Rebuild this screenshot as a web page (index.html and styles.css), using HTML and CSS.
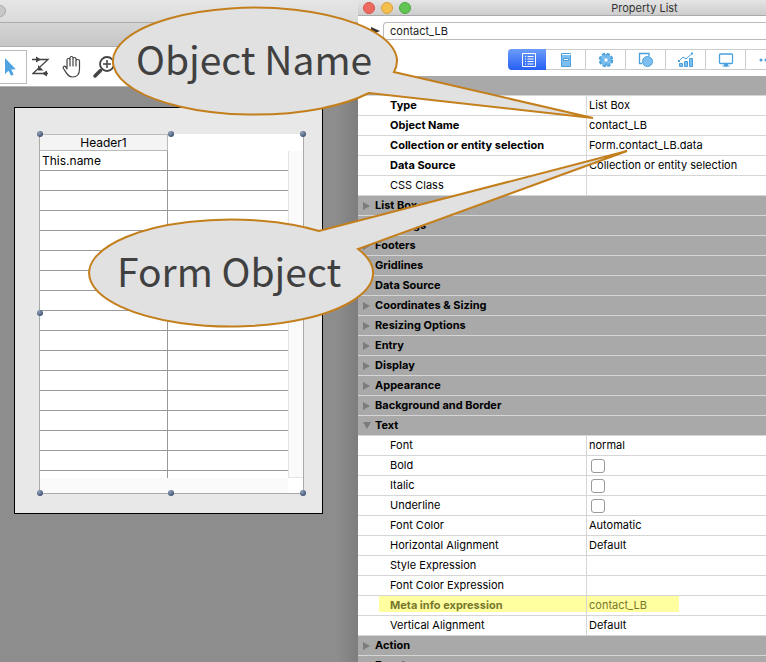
FILE: index.html
```
<!DOCTYPE html>
<html lang="en">
<head>
<meta charset="utf-8">
<title>Property List</title>
<link rel="stylesheet" href="styles.css">
</head>
<body>
<div class="desktop">
  <section class="editor" aria-label="Form editor">
    <header class="titlebar"><span class="dot dot-off"></span></header>
    <div class="subbar"></div>
    <div class="toolbar">
      <button class="tool active" aria-label="Select">
        <svg width="26" height="34" viewBox="0 0 26 34"><path d="M5 8v16l3.500-3.200 2.600 5 2.600-1.400-2.500-4.800 4.600-.4z" fill="#4fa3e0"/></svg>
      </button>
      <button class="tool" aria-label="Entry order">
        <svg width="20" height="22" viewBox="0 0 20 22" fill="none" stroke="#444" stroke-width="1.300"><path d="M0 3.500h16L1 17.500h15"/><path d="M4 .5l5 3-5 3zM15 14.500l-5 3 5 3zM6 9v5.500h5.500z" fill="#444" stroke="none"/></svg>
      </button>
      <button class="tool" aria-label="Pan">
        <svg width="20" height="24" viewBox="0 0 20 24" fill="none" stroke="#444" stroke-width="1.200" stroke-linejoin="round" stroke-linecap="round"><path d="M5 13V5c0-2 3-2 3 0v6M8 6V3c0-2 3-2 3 0v8M11 4c0-2 3-2 3 0v7M14 6c0-2 3.500-2 3.500 0v8c0 5-2.500 8-7 8C6 22 4.500 18 1.500 13.500c-1-2 1-3 2.300-1.500L5 14"/></svg>
      </button>
      <button class="tool" aria-label="Zoom">
        <svg width="24" height="24" viewBox="0 0 24 24" fill="none" stroke="#444"><circle cx="15" cy="9" r="7" stroke-width="1.800"/><path d="M11 9h8M15 5v8" stroke-width="1.500"/><path d="M8.500 15.500L3 21" stroke-width="3.500" stroke-linecap="round"/></svg>
      </button>
    </div>
    <div class="canvas">
      <div class="form-page">
        <div class="listbox">
          <table class="grid">
            <thead><tr><th>Header1</th><td></td></tr></thead>
            <tbody>
              <tr><td>This.name</td><td></td></tr>
              <tr><td></td><td></td></tr><tr><td></td><td></td></tr><tr><td></td><td></td></tr>
              <tr><td></td><td></td></tr><tr><td></td><td></td></tr><tr><td></td><td></td></tr>
              <tr><td></td><td></td></tr><tr><td></td><td></td></tr><tr><td></td><td></td></tr>
              <tr><td></td><td></td></tr><tr><td></td><td></td></tr><tr><td></td><td></td></tr>
              <tr><td></td><td></td></tr><tr><td></td><td></td></tr><tr><td></td><td></td></tr>
              <tr class="partial"><td></td><td></td></tr>
            </tbody>
          </table>
          <div class="vscroll"></div>
          <div class="hscroll"></div>
          <i class="handle t l"></i><i class="handle t c"></i><i class="handle t r"></i>
          <i class="handle m l"></i><i class="handle b l"></i><i class="handle b c"></i><i class="handle b r"></i>
        </div>
      </div>
    </div>
  </section>

  <section class="panel" aria-label="Property List">
    <header class="titlebar panel-title">
      <span class="dot red"></span><span class="dot yellow"></span><span class="dot green"></span>
      <h1>Property List</h1>
    </header>
    <div class="picker">
      <svg width="10" height="8" viewBox="0 0 10 8" aria-hidden="true"><path d="M1 0l9 4-9 4z" fill="#333"/></svg>
      <input type="text" value="contact_LB" aria-label="Object">
    </div>
    <div class="tabs">
      <button class="tab selected" aria-label="All properties"><svg width="16" height="16" viewBox="0 0 16 16" fill="none" stroke="#fff"><path d="M1.500 1.500h13v13h-13z"/><path d="M4 4.500h1M4 7h1M4 9.500h1M4 12h1M6.500 4.500h6M6.500 7h6M6.500 9.500h6M6.500 12h6"/></svg></button>
      <button class="tab" aria-label="Data"><svg width="16" height="16" viewBox="0 0 16 16"><path d="M3.500 1.500h9v13h-9z" fill="#7dc0ef" stroke="#4aa0dc"/><path d="M4 2.500h10" stroke="#fff"/><path d="M5.500 6.500h5v2h-5z" fill="#fff" stroke="#4aa0dc"/></svg></button>
      <button class="tab" aria-label="Settings"><svg width="16" height="16" viewBox="0 0 16 16"><circle cx="8" cy="8" r="6" fill="none" stroke="#4aa0dc" stroke-width="2.500" stroke-dasharray="3.200 1.500"/><circle cx="8" cy="8" r="5.500" fill="#7dc0ef" stroke="#4aa0dc" stroke-width=".6"/><path d="M8 3v10M3 8h10" stroke="#4aa0dc" stroke-width=".8"/><circle cx="8" cy="8" r="1.700" fill="#fff"/></svg></button>
      <button class="tab" aria-label="Appearance"><svg width="16" height="16" viewBox="0 0 16 16"><path d="M4 11.500H1.500V1.500H11V4" fill="none" stroke="#4aa0dc" stroke-width="1.300"/><circle cx="9.500" cy="9.500" r="5" fill="#7dc0ef" stroke="#4aa0dc"/></svg></button>
      <button class="tab" aria-label="Statistics"><svg width="16" height="16" viewBox="0 0 16 16"><path d="M1.500 11.500h3v3h-3zM6.500 9.500h3v5h-3zM11.500 6.500h3v8h-3z" fill="#7dc0ef" stroke="#4aa0dc"/><path d="M1 9l4-4 3 2 6-5.500" fill="none" stroke="#4aa0dc"/><path d="M13 .5h2v2h-2zM0 8h2v2H0z" fill="#4aa0dc"/></svg></button>
      <button class="tab" aria-label="Display"><svg width="16" height="16" viewBox="0 0 16 16"><rect x="1.500" y="2" width="13" height="9.500" rx="1" fill="none" stroke="#4aa0dc" stroke-width="1.300"/><path d="M6.500 12h3v2h-3zM4.500 14h7" fill="#4aa0dc" stroke="#4aa0dc"/></svg></button>
      <button class="tab" aria-label="More"><svg width="16" height="16" viewBox="0 0 16 16" fill="#4aa0dc"><circle cx="3" cy="8" r="1.500"/><circle cx="8" cy="8" r="1.500"/><circle cx="13" cy="8" r="1.500"/></svg></button>
    </div>
    <div class="props">
      <div class="group blank"></div>
      <div class="row strong"><span>Type</span><span>List Box</span></div>
      <div class="row strong"><span>Object Name</span><span>contact_LB</span></div>
      <div class="row strong"><span>Collection or entity selection</span><span>Form.contact_LB.data</span></div>
      <div class="row strong"><span>Data Source</span><span>Collection or entity selection</span></div>
      <div class="row"><span>CSS Class</span><span></span></div>
      <div class="group">List Box</div>
      <div class="group">Headings</div>
      <div class="group">Footers</div>
      <div class="group">Gridlines</div>
      <div class="group">Data Source</div>
      <div class="group">Coordinates &amp; Sizing</div>
      <div class="group">Resizing Options</div>
      <div class="group">Entry</div>
      <div class="group">Display</div>
      <div class="group">Appearance</div>
      <div class="group">Background and Border</div>
      <div class="group open">Text</div>
      <div class="row"><span>Font</span><span>normal</span></div>
      <div class="row"><label for="bold">Bold</label><span><input type="checkbox" id="bold"></span></div>
      <div class="row"><label for="italic">Italic</label><span><input type="checkbox" id="italic"></span></div>
      <div class="row"><label for="underline">Underline</label><span><input type="checkbox" id="underline"></span></div>
      <div class="row"><span>Font Color</span><span>Automatic</span></div>
      <div class="row"><span>Horizontal Alignment</span><span>Default</span></div>
      <div class="row"><span>Style Expression</span><span></span></div>
      <div class="row"><span>Font Color Expression</span><span></span></div>
      <div class="row strong marked"><span>Meta info expression</span><span>contact_LB</span></div>
      <div class="row"><span>Vertical Alignment</span><span>Default</span></div>
      <div class="group">Action</div>
      <div class="group">Events</div>
    </div>
  </section>

  <svg class="callouts" width="766" height="662" viewBox="0 0 766 662">
    <g fill="#e1e1e1" stroke="#c47f1d" stroke-width="2" stroke-linejoin="miter">
      <path d="M369 93A142 53.500 0 1 1 394 72L593 118Z"/>
      <path d="M319 231A142 53.500 0 1 0 358 249L627 151Z"/>
    </g>
    <text class="say" x="136" y="75">Object Name</text>
    <text class="say" x="117" y="287">Form Object</text>
  </svg>
</div>
</body>
</html>
```
FILE: styles.css
```
* { box-sizing: border-box; }
body { margin: 0; font-family: Inter, "Liberation Sans", sans-serif; font-size: 11px; color: #000; }
button { padding: 0; border: 0; background: none; }
.desktop { position: relative; display: flex; height: 100vh; overflow: hidden; background: #8d8d8d; }

.editor { flex: 0 0 358px; display: flex; flex-direction: column; }
.titlebar { display: flex; align-items: center; height: 23px; background: linear-gradient(#e6e6e6, #dadada); border-bottom: 1px solid #acacac; }
.dot { width: 12px; height: 12px; border-radius: 50%; border: 1px solid; }
.dot-off { margin-left: -6px; background: #c8c8c8; border-color: #aaa; }
.subbar { height: 24px; background: linear-gradient(#d4d4d4, #c6c6c6); border-bottom: 1px solid #b0b0b0; }
.toolbar { display: flex; align-items: center; gap: 10px; height: 40px; background: #fff; border-bottom: 1px solid #b4b4b4; }
.tool { display: flex; align-items: center; justify-content: center; }
.tool.active { width: 27px; height: 34px; border: 1px solid #bbb; border-left: 0; margin-right: -5px; }
.canvas { flex: 1; padding: 20px 35px 0 14px; background: linear-gradient(to right, transparent 94%, #7d7d7d); }
.form-page { height: 407px; padding: 26px 18px 19px 24px; background: #e8e8e8; border: 1px solid #000; }

.listbox { position: relative; display: grid; grid-template: 344px 1fr / 1fr 15px; height: 360px; background: #fff; border: 1px solid #aaa; border-top: 0; }
.grid { width: 100%; height: 344px; border-collapse: separate; border-spacing: 0; table-layout: fixed; }
.grid th, .grid td { height: 20px; padding: 0 2px; border-bottom: 1px solid #999; font-size: 12px; font-weight: 400; line-height: 18px; }
.grid thead th { width: 128px; height: 17px; line-height: 15px; background: #f4f4f4; border: solid #bbb; border-width: 1px 1px 1px 0; }
.grid thead td { height: 17px; border: 0; }
.grid tbody td:first-child { border-right: 1px solid #999; }
.grid .partial td { height: 7px; border-bottom: 0; }
.vscroll { background: #fafafa; border: solid #e4e4e4; border-width: 0 0 1px 1px; margin-top: 17px; }
.hscroll { background: #fafafa; }
.handle { position: absolute; width: 6px; height: 6px; border-radius: 50%; background: radial-gradient(circle at 35% 30%, #93a3bd, #3d5070 75%); }
.handle.t { top: -3px; } .handle.m { top: calc(50% - 4px); } .handle.b { bottom: -3px; }
.handle.l { left: -3px; } .handle.c { left: calc(50% - 4px); } .handle.r { right: -3px; }

.panel { flex: 1; min-width: 0; background: #fff; }
.panel-title { height: 16px; gap: 6px; padding-left: 5px; background: linear-gradient(#e4e4e4, #cdcdcd); border-color: #aaa; }
.panel-title h1 { flex: 1; margin: 0 0 0 106px; text-align: center; font-size: 11px; font-weight: 400; color: #333; }
.red { background: #ed6a5e; border-color: #d5544a; }
.yellow { background: #f5bf4f; border-color: #d8a03c; }
.green { background: #61c454; border-color: #4ba73e; }
.picker { display: flex; align-items: center; gap: 3px; height: 18px; margin: 6px 0 9px 12px; }
.picker input { flex: 1; min-width: 0; height: 18px; padding: 0 6px; border: 1px solid #bbb; border-right: 0; border-radius: 4px 0 0 4px; font: inherit; color: #222; }
.tabs { display: flex; height: 21px; margin: 0 -20px 6px 150px; border: solid #ccc; border-width: 1px 0; border-radius: 4px 0 0 4px; }
.tab { flex: 1 0 40px; display: flex; align-items: center; justify-content: center; border-right: 1px solid #ccc; }
.tab.selected { flex: 0 0 38px; background: linear-gradient(#6c9cf8, #2660f5); border: 0; border-radius: 4px 0 0 4px; margin: -1px 0; padding-left: 4px; }

.group, .row { height: 20px; line-height: 19px; border-bottom: 1px solid #d6d6d6; }
.group { display: flex; align-items: center; gap: 5px; padding-left: 5px; background: #a9a9a9; font-weight: 700; }
.group::before { content: ""; border: solid transparent; border-width: 4px 0 4px 7px; border-left-color: #7c7c7c; }
.group.open::before { border-width: 7px 4px 0; border-color: #7c7c7c transparent transparent; margin-right: -1px; }
.group.blank::before { content: none; }
.row { display: grid; grid-template-columns: 228px 1fr; background: #fff; }
.row > :first-child { padding-left: 32px; }
.row > :last-child { padding-left: 2px; border-left: 1px solid #d6d6d6; }
.strong > :first-child { font-weight: 700; }
.row input { appearance: none; display: block; width: 14px; height: 14px; margin: 3px 2px; border: 1px solid #999; border-radius: 3px; background: #fff; }
.row.marked { color: #77772c; background: linear-gradient(#ffffa0, #ffffa0) 21px 0 / 300px 16px no-repeat #fff; }

.callouts { position: absolute; left: 0; top: 0; pointer-events: none; }
.say { font-family: "Noto Sans CJK SC", "Open Sans", sans-serif; font-size: 39px; fill: #404040; }
```
